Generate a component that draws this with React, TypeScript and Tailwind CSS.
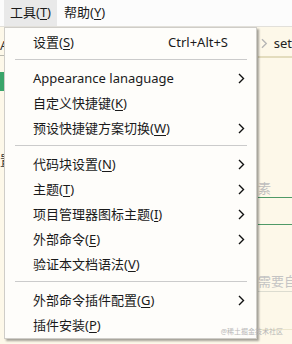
import type { ReactNode } from "react";

const FONT = "font-['Noto_Sans','Noto_Sans_CJK_SC',sans-serif]";

type MenuEntry =
  | { kind: "item"; label: ReactNode; shortcut?: string; submenu?: boolean }
  | { kind: "sep" };

function Key({ children }: { children: ReactNode }) {
  return <span className="underline underline-offset-2">{children}</span>;
}

const entries: MenuEntry[] = [
  { kind: "item", label: <>设置(<Key>S</Key>)</>, shortcut: "Ctrl+Alt+S" },
  { kind: "sep" },
  { kind: "item", label: "Appearance lanaguage", submenu: true },
  { kind: "item", label: <>自定义快捷键(<Key>K</Key>)</> },
  { kind: "item", label: <>预设快捷键方案切换(<Key>W</Key>)</>, submenu: true },
  { kind: "sep" },
  { kind: "item", label: <>代码块设置(<Key>N</Key>)</>, submenu: true },
  { kind: "item", label: <>主题(<Key>T</Key>)</>, submenu: true },
  { kind: "item", label: <>项目管理器图标主题(<Key>I</Key>)</>, submenu: true },
  { kind: "item", label: <>外部命令(<Key>E</Key>)</>, submenu: true },
  { kind: "item", label: <>验证本文档语法(<Key>V</Key>)</> },
  { kind: "sep" },
  { kind: "item", label: <>外部命令插件配置(<Key>G</Key>)</>, submenu: true },
  { kind: "item", label: <>插件安装(<Key>P</Key>)</> },
];

function Chevron({ className = "" }: { className?: string }) {
  return (
    <svg width="7" height="11" viewBox="0 0 7 11" className={className} aria-hidden="true">
      <polyline points="1,1 5.5,5.5 1,10" fill="none" stroke="currentColor" strokeWidth="1.4" />
    </svg>
  );
}

function ToolsMenu() {
  return (
    <div className="absolute left-[4px] top-[27px] w-[253px] border border-[#cfcdc8] bg-[#fefdfa] pt-[2px] shadow-[2px_2px_2px_rgba(0,0,0,0.35)]">
      {entries.map((entry, i) =>
        entry.kind === "sep" ? (
          <div key={i} className="h-[11px] pl-[10px] pr-[9px] pt-[4px]">
            <div className="h-px bg-[#cbcbcb]" />
          </div>
        ) : (
          <div key={i} className="flex h-[25px] items-center pl-[28px] pr-[11px] text-[13px] text-[#1a1a1a]">
            <span className="flex-1 whitespace-nowrap">{entry.label}</span>
            {entry.shortcut && <span className="mr-[17px]">{entry.shortcut}</span>}
            {entry.submenu && <Chevron className="text-[#111]" />}
          </div>
        ),
      )}
    </div>
  );
}

export default function App() {
  return (
    <div className={`relative h-[344px] w-[292px] overflow-hidden bg-[#fdf8e9] ${FONT}`}>
      {/* menu bar */}
      <div className="flex h-[27px] items-stretch border-b border-[#e2e0da] bg-[#fcfcfc] text-[13px] text-[#1a1a1a]">
        <div className="ml-[4px] flex w-[53px] items-center justify-center bg-[#e9e9e9]">
          工具(<Key>T</Key>)
        </div>
        <div className="ml-[7px] flex items-center">
          帮助(<Key>Y</Key>)
        </div>
      </div>

      {/* editor behind the menu */}
      <div className="flex h-[317px]">
        <div className="w-[4px] shrink-0 overflow-hidden text-[13px] text-[#333]">
          <div className="mt-[8px] h-[20px] leading-[20px]">A</div>
          <div className="h-px bg-[#b9b9b0]" />
          <div className="mt-[16px] h-[19px] bg-[#3aa56a]" />
          <div className="mt-[59px] leading-[20px]">置</div>
        </div>
        <div className="flex-1" />
        <div className="w-[34px] shrink-0 overflow-hidden text-[13px]">
          <div className="mt-[6px] flex h-[21px] items-center gap-[6px] whitespace-nowrap pl-[3px] text-[#222]">
            <Chevron className="text-[#b5b5b5]" />
            <span>set</span>
          </div>
          <div className="mt-[2px] h-[2px] border-y border-[#e3dcbd]" />
          <div className="mt-[121px] whitespace-nowrap leading-[18px] text-[#bdbdbd]">素</div>
          <div className="h-px bg-[#4f9a67]" />
          <div className="mt-[26px] h-px bg-[#4f9a67]" />
          <div className="mt-[47px] whitespace-nowrap leading-[18px] text-[#c4c4c4]">需要自定</div>
          <div className="mt-[1px] h-px bg-[#dcdcd0]" />
          <div className="mt-[37px] h-px bg-[#ece6cd]" />
        </div>
      </div>

      <ToolsMenu />

      <div className="absolute bottom-[7px] right-[9px] text-[7px] text-[#b8b8b8]">@稀土掘金技术社区</div>
    </div>
  );
}
